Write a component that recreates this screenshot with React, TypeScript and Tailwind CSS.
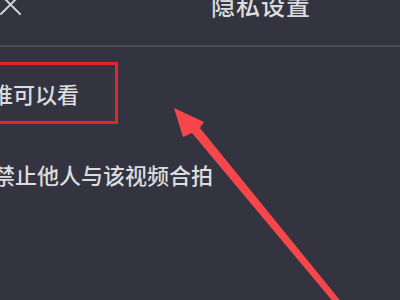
import React from "react";

const FONT = {
	fontFamily: '"Noto Sans CJK SC", "Noto Sans", sans-serif',
};

function CloseIcon() {
	return (
		<svg width="22" height="22" viewBox="0 0 22 22" className="shrink-0">
			<path
				d="M1 -4 L20 15 M20 -4 L1 15"
				stroke="#cfd0d4"
				strokeWidth="2"
				strokeLinecap="round"
				fill="none"
			/>
		</svg>
	);
}

/** Annotation arrow pointing at the highlighted row */
function Arrow() {
	return (
		<svg
			width="400"
			height="300"
			viewBox="0 0 400 300"
			className="pointer-events-none absolute left-0 top-0"
		>
			<polygon
				points="174,108 204,122 200,128 343,304 335,304 192,133 183,137"
				fill="#f5474b"
			/>
		</svg>
	);
}

export default function App() {
	return (
		<div
			className="relative h-[300px] w-[400px] overflow-hidden bg-[#33343f] font-medium text-[#dcdcdf]"
			style={FONT}
		>
			{/* Header */}
			<div className="flex h-[47px] items-start border-b-2 border-[#4b4d58]">
				<div className="-mt-[1px]">
					<CloseIcon />
				</div>
				<div className="-mt-[7px] ml-[189px] text-[24px] leading-[24px] tracking-[1px]">
					隐私设置
				</div>
			</div>

			{/* Options */}
			<div className="flex flex-col">
				<div className="-ml-[20px] mt-[15px] flex h-[62px] w-[138px] items-center border-[3px] border-[#e3262b] pl-[8px]">
					<span className="text-[22px] leading-[22px]">谁可以看</span>
				</div>
				<div className="-ml-[7px] mt-[39px] text-[22px] leading-[22px]">
					禁止他人与该视频合拍
				</div>
			</div>

			<Arrow />
		</div>
	);
}
